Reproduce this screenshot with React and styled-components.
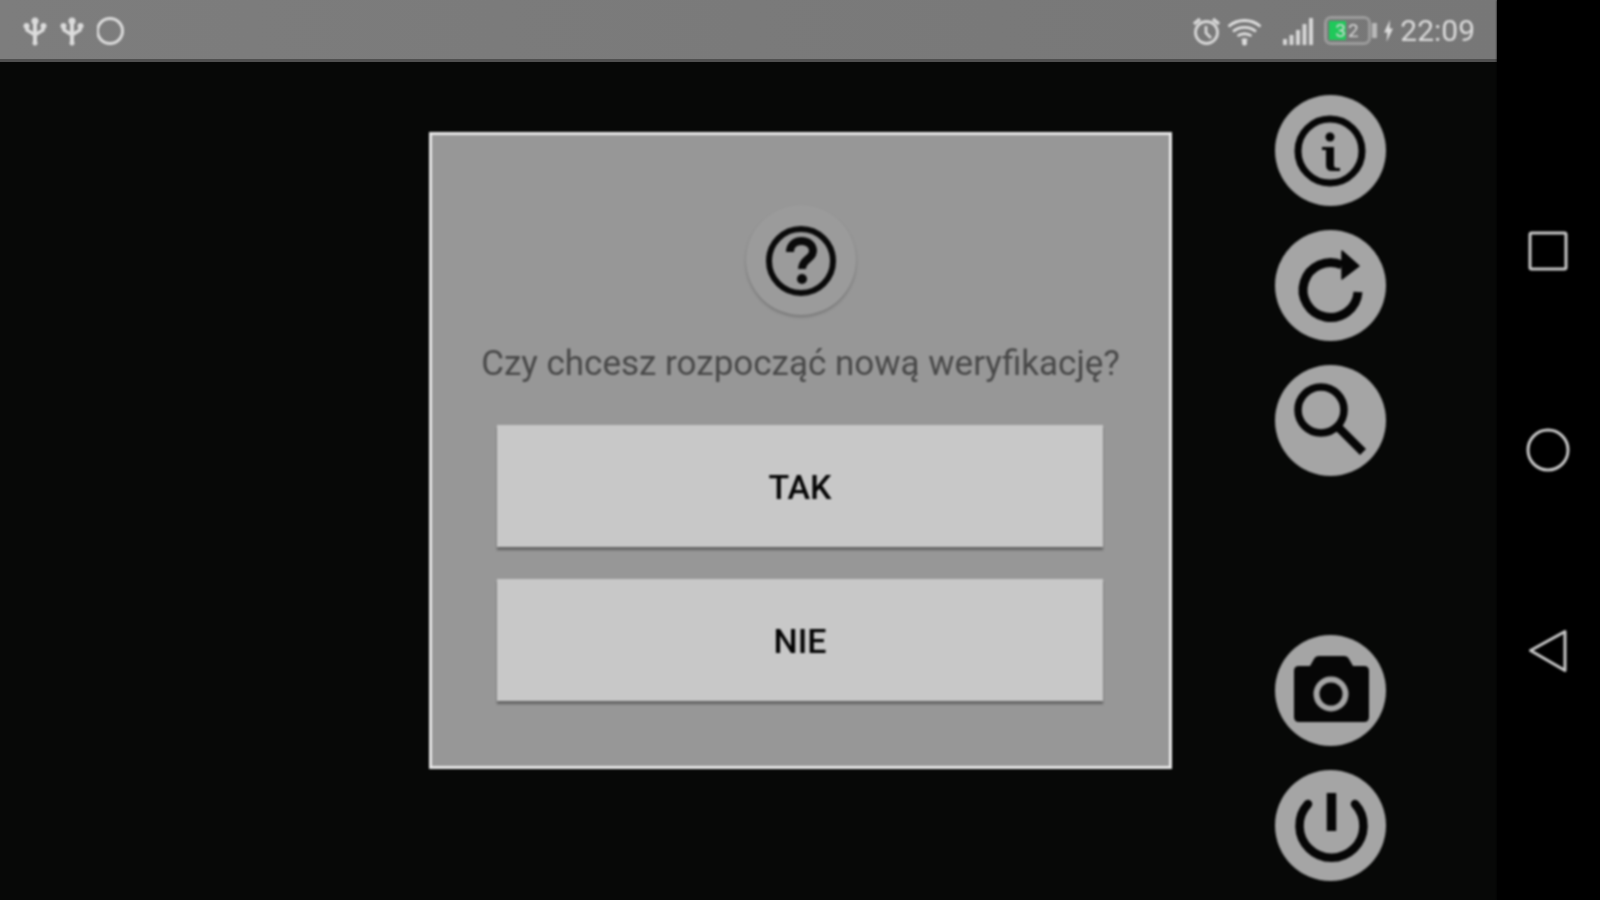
import React from "react"
import styled, { createGlobalStyle } from "styled-components"

const GlobalStyle = createGlobalStyle`
  html, body {
    margin: 0;
    height: 100%;
    background: #000;
    font-family: Roboto, "Liberation Sans", sans-serif;
  }
`

const Screen = styled.div`
  display: flex;
  width: 1600px;
  height: 900px;
  overflow: hidden;
  background: #000;
`

const Display = styled.div`
  display: flex;
  flex-direction: column;
  width: 1497px;
  background: #070807;
`

const StatusBar = styled.header`
  display: flex;
  align-items: center;
  justify-content: space-between;
  flex: none;
  box-sizing: border-box;
  height: 62px;
  padding: 2px 22px 0 23px;
  background: linear-gradient(90deg, #7d7d7d, #777);
  border-bottom: 3px solid #505050;
`

const StatusGroup = styled.div`
  display: flex;
  align-items: center;
  gap: ${(p) => p.$gap || 0}px;
  filter: blur(0.8px);
`

const StatusIcon = styled.svg`
  display: block;
  flex: none;
  margin-right: ${(p) => p.$after || 0}px;
`

const Battery = styled.div`
  position: relative;
  display: flex;
  align-items: center;
  box-sizing: border-box;
  width: 47px;
  height: 29px;
  margin-right: 2px;
  padding: 2px 3px;
  border: 3px solid #9c9c9c;
  border-radius: 7px;
  &::after {
    content: "";
    position: absolute;
    right: -9px;
    top: 4px;
    width: 5px;
    height: 15px;
    background: #b8b8b8;
  }
`

const BatteryFill = styled.div`
  position: absolute;
  left: 2px;
  top: 2px;
  bottom: 2px;
  width: 17px;
  background: #1fc95a;
`

const BatteryText = styled.span`
  position: relative;
  width: 100%;
  padding-left: 5px;
  font-size: 19px;
  line-height: 1;
  letter-spacing: 2px;
  color: #d8d8d8;
`

const Clock = styled.span`
  font-size: 30px;
  line-height: 1;
  color: #dcdcdc;
`

const Main = styled.main`
  display: flex;
  flex: 1;
  min-height: 0;
  padding-left: 429px;
  filter: blur(0.8px);
`

const Dialog = styled.section`
  display: flex;
  flex-direction: column;
  align-items: center;
  flex: none;
  box-sizing: border-box;
  width: 743px;
  height: 637px;
  margin-top: 70px;
  padding-top: 70px;
  background: #979797;
  border: 3px solid #e9e9e9;
`

const QuestionBadge = styled.div`
  display: flex;
  align-items: center;
  justify-content: center;
  width: 110px;
  height: 110px;
  padding-top: 2px;
  box-sizing: border-box;
  border-radius: 50%;
  background: #9b9b9b;
  box-shadow: 0 2px 3px rgba(0, 0, 0, 0.22);
`

const Message = styled.p`
  margin: 27px 0 0;
  font-size: 35px;
  line-height: 44px;
  white-space: nowrap;
  color: #484848;
`

const DialogButton = styled.button`
  flex: none;
  width: 606px;
  height: 122px;
  margin-top: ${(p) => p.$top}px;
  margin-right: 1px;
  padding: 2px 0 0;
  border: 0;
  background: #c8c8c8;
  box-shadow: 0 3px 2px rgba(0, 0, 0, 0.35);
  font-family: inherit;
  font-size: 34px;
  font-weight: 500;
  color: #050505;
`

const ActionColumn = styled.aside`
  display: flex;
  flex-direction: column;
  justify-content: space-between;
  flex: none;
  width: 111px;
  height: 786px;
  margin: 33px 0 0 103px;
`

const ActionGroup = styled.div`
  display: flex;
  flex-direction: column;
  gap: 24px;
`

const RoundButton = styled.button`
  display: flex;
  align-items: center;
  justify-content: center;
  width: 111px;
  height: 111px;
  padding: 0;
  border: 0;
  border-radius: 50%;
  background: #a5a5a5;
`

const NavBar = styled.nav`
  display: flex;
  flex-direction: column;
  align-items: center;
  gap: 157px;
  flex: none;
  box-sizing: border-box;
  width: 103px;
  padding: 231px 2px 0 0;
  background: #000;
  filter: blur(0.8px);
`

const UsbIcon = () => (
  <StatusIcon width="24" height="30" viewBox="0 0 24 30" fill="none" stroke="#dcdcdc">
    <path d="M12 3v24" strokeWidth="4" />
    <path d="M4 10v4l8 5 8-5v-4" strokeWidth="3.500" />
    <circle cx="12" cy="5" r="3.500" fill="#dcdcdc" stroke="none" />
    <circle cx="3.500" cy="10" r="3" fill="#dcdcdc" stroke="none" />
    <circle cx="20.500" cy="10" r="3" fill="#dcdcdc" stroke="none" />
    <circle cx="12" cy="27" r="2.500" fill="#dcdcdc" stroke="none" />
  </StatusIcon>
)

const AlarmIcon = () => (
  <StatusIcon $after={6} width="29" height="30" viewBox="0 0 29 30" fill="none" stroke="#d8d8d8" strokeWidth="2.800">
    <circle cx="14.500" cy="16.500" r="11" />
    <path d="M14 10v7l5 5" />
    <path d="M2 8l6-5M27 8l-6-5" strokeWidth="3.500" />
  </StatusIcon>
)

const WifiIcon = () => (
  <StatusIcon $after={21} width="35" height="30" viewBox="0 0 35 30" fill="none" stroke="#dedede" strokeWidth="2.800">
    <path d="M1.500 10.500c9-8 23-8 32 0" />
    <path d="M6 15.500c6.500-5.500 16.500-5.500 23 0" />
    <path d="M10.500 20c4-3 10-3 14 0" />
    <path d="M15 24.500c1.500-1 3.500-1 5 0" />
    <circle cx="17.500" cy="27" r="2.500" fill="#dedede" stroke="none" />
  </StatusIcon>
)

const SignalIcon = () => (
  <StatusIcon $after={11} width="30" height="30" viewBox="0 0 30 30" fill="#d6d6d6">
    <rect x="0" y="23" width="4" height="6" />
    <rect x="6.500" y="19" width="4" height="10" />
    <rect x="13" y="14" width="4" height="15" />
    <rect x="19.500" y="8" width="4" height="21" />
    <rect x="26" y="2" width="4" height="27" />
  </StatusIcon>
)

const BoltIcon = () => (
  <StatusIcon $after={7} width="9" height="22" viewBox="0 0 9 22" fill="#dcdcdc">
    <path d="M6 0L0 12.500h3.500L2.500 22 9 8.500H5.500z" />
  </StatusIcon>
)

const InfoIcon = () => (
  <svg width="111" height="111" viewBox="0 0 111 111" fill="none">
    <circle cx="55" cy="56" r="32" stroke="#060606" strokeWidth="7" />
    <circle cx="55" cy="42" r="4.500" fill="#060606" />
    <path d="M47 52h12v18q0 3 3 3h3v3h-8q-6 0-6-6V55h-4z" fill="#060606" />
  </svg>
)

const RefreshIcon = () => (
  <svg width="111" height="111" viewBox="0 0 111 111" fill="none">
    <path d="M83 62A27.500 27.500 0 1 1 67 35" stroke="#060606" strokeWidth="9" />
    <path d="M67 21l17 15-17 13z" fill="#060606" stroke="#060606" strokeWidth="1.500" strokeLinejoin="round" />
  </svg>
)

const SearchIcon = () => (
  <svg width="111" height="111" viewBox="0 0 111 111" fill="none">
    <circle cx="46" cy="45" r="23" stroke="#060606" strokeWidth="7.500" />
    <path d="M64 63l24 24" stroke="#060606" strokeWidth="8.500" />
  </svg>
)

const CameraIcon = () => (
  <svg width="111" height="111" viewBox="0 0 111 111" fill="none">
    <path d="M24 31h11l4-7q1.500-3 5-3h25q3.500 0 5 3l4 7h11q5 0 5 5v46q0 5-5 5H24q-5 0-5-5V36q0-5 5-5z" fill="#060606" />
    <circle cx="56" cy="59" r="14.500" stroke="#a5a5a5" strokeWidth="6" />
  </svg>
)

const PowerIcon = () => (
  <svg width="111" height="111" viewBox="0 0 111 111" fill="none">
    <path d="M56.500 23v38" stroke="#060606" strokeWidth="9.500" />
    <path d="M33 34A32 32 0 1 0 80 34" stroke="#060606" strokeWidth="8.500" strokeLinecap="round" />
  </svg>
)

const QuestionIcon = () => (
  <svg width="70" height="72" viewBox="0 0 70 72" fill="none">
    <circle cx="35" cy="36" r="32" stroke="#0a0a0a" strokeWidth="6" />
    <path d="M24 27c0-7 5-11 11.500-11S47 20 47 26c0 8-11 8-11 18" stroke="#0a0a0a" strokeWidth="8" />
    <circle cx="36" cy="54" r="5" fill="#0a0a0a" />
  </svg>
)

const SquareIcon = () => (
  <svg width="40" height="40" viewBox="0 0 40 40" fill="none">
    <rect x="2" y="2" width="36" height="36" rx="1.500" stroke="#c8c8c8" strokeWidth="3" />
  </svg>
)

const CircleIcon = () => (
  <svg width="44" height="44" viewBox="0 0 44 44" fill="none">
    <circle cx="22" cy="22" r="20" stroke="#c8c8c8" strokeWidth="3" />
  </svg>
)

const BackIcon = () => (
  <svg width="40" height="44" viewBox="0 0 40 44" fill="none">
    <path d="M37 2.500v39L2.500 21.500z" stroke="#c8c8c8" strokeWidth="3" strokeLinejoin="round" />
  </svg>
)

export default function App() {
  return (
    <>
      <GlobalStyle />
      <Screen>
        <Display>
          <StatusBar>
            <StatusGroup $gap={13}>
              <UsbIcon />
              <UsbIcon />
              <StatusIcon width="30" height="30" viewBox="0 0 30 30" fill="none">
                <circle cx="13" cy="15" r="12.500" stroke="#dcdcdc" strokeWidth="3" />
              </StatusIcon>
            </StatusGroup>
            <StatusGroup>
              <AlarmIcon />
              <WifiIcon />
              <SignalIcon />
              <Battery>
                <BatteryFill />
                <BatteryText>32</BatteryText>
              </Battery>
              <StatusIcon $after={6} width="5" height="13" />
              <BoltIcon />
              <Clock>22:09</Clock>
            </StatusGroup>
          </StatusBar>
          <Main>
            <Dialog>
              <QuestionBadge>
                <QuestionIcon />
              </QuestionBadge>
              <Message>Czy chcesz rozpocząć nową weryfikację?</Message>
              <DialogButton $top={39}>TAK</DialogButton>
              <DialogButton $top={32}>NIE</DialogButton>
            </Dialog>
            <ActionColumn>
              <ActionGroup>
                <RoundButton><InfoIcon /></RoundButton>
                <RoundButton><RefreshIcon /></RoundButton>
                <RoundButton><SearchIcon /></RoundButton>
              </ActionGroup>
              <ActionGroup>
                <RoundButton><CameraIcon /></RoundButton>
                <RoundButton><PowerIcon /></RoundButton>
              </ActionGroup>
            </ActionColumn>
          </Main>
        </Display>
        <NavBar>
          <SquareIcon />
          <CircleIcon />
          <BackIcon />
        </NavBar>
      </Screen>
    </>
  )
}
